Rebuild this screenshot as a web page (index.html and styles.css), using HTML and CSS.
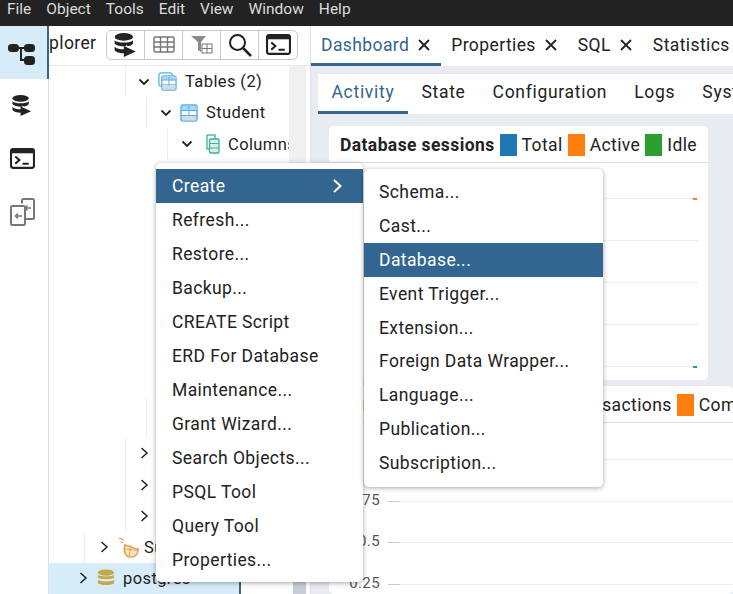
FILE: index.html
```html
<!DOCTYPE html>
<html lang="en">
<head>
    <meta charset="UTF-8">
    <meta name="viewport" content="width=device-width, initial-scale=1.0">
    <title>pgAdmin</title>
    <link rel="stylesheet" href="styles.css">
</head>
<body>
    <svg class="defs" width="0" height="0">
        <symbol id="db-run" viewBox="0 0 24 24">
            <ellipse cx="10" cy="4.5" rx="8.5" ry="3.5" fill="currentColor"/>
            <path d="M1.500 7.500c2 3 15 3 17 0v3c-1 1.500-3 2.300-5 2.500l-1.500-1v1.200c-4 .3-9-.7-10.500-2.700z" fill="currentColor"/>
            <path d="M1.500 13.500c1.500 1.700 5 2.500 8.500 2.500v3.500c-4 0-7.500-1-8.500-3zM10 13v10l11-5z" fill="currentColor"/>
        </symbol>
        <symbol id="terminal" viewBox="0 0 24 20">
            <rect x="1" y="1" width="22" height="18" rx="2" fill="#fff" stroke="#222" stroke-width="2"/>
            <rect x="1" y="1" width="22" height="4" fill="#222"/>
            <path d="M5 8l4 3.500-4 3.500M12 15h6" fill="none" stroke="#222" stroke-width="2"/>
        </symbol>
        <symbol id="table" viewBox="0 0 18 18">
            <rect x="1" y="1" width="16" height="16" rx="2" fill="#fff" stroke="#56aee6" stroke-width="1.500"/>
            <rect x="1.500" y="2" width="15" height="4.500" fill="#a8d6f2"/>
            <path d="M1 6.500h16M1 11.500h16M9 2v15" stroke="#56aee6" stroke-width="1"/>
            <rect x="2" y="12" width="14" height="4.500" fill="#d5dbe4"/>
        </symbol>
        <symbol id="tables" viewBox="0 0 20 20">
            <rect x="1" y="1" width="14" height="14" rx="2" fill="#fff" stroke="#56aee6" stroke-width="1.300"/>
            <rect x="4" y="4" width="15" height="15" rx="2" fill="#fff" stroke="#56aee6" stroke-width="1.300"/>
            <rect x="4.500" y="5" width="14" height="3.500" fill="#a8d6f2"/>
            <path d="M4 8.500h15M4 13.500h15M11.500 5v14" stroke="#56aee6"/>
            <rect x="5" y="14" width="13" height="4.300" fill="#d5dbe4"/>
        </symbol>
        <symbol id="close" viewBox="0 0 14 14">
            <path d="M2 2l10 10M12 2L2 12" fill="none" stroke="#222" stroke-width="1.800"/>
        </symbol>
        <symbol id="chev-down" viewBox="0 0 12 12">
            <path d="M1.500 3.500L6 8l4.500-4.500" fill="none" stroke="#222" stroke-width="1.800"/>
        </symbol>
        <symbol id="chev-right" viewBox="0 0 12 12">
            <path d="M3.500 1L9 6l-5.500 5" fill="none" stroke="#222" stroke-width="1.500"/>
        </symbol>
    </svg>

    <div class="app">
        <div class="menubar">
            <span>File</span>
            <span>Object</span>
            <span>Tools</span>
            <span>Edit</span>
            <span>View</span>
            <span>Window</span>
            <span>Help</span>
        </div>

        <div class="workspace">
            <div class="rail">
                <div class="rail-item active">
                    <svg width="28" height="24" viewBox="0 0 28 24">
                        <rect x="0" y="3" width="11" height="8" rx="3.500" fill="#222"/>
                        <rect x="16" y="3" width="11" height="8" rx="3.500" fill="#222"/>
                        <rect x="16" y="15" width="11" height="9" rx="3.500" fill="#222"/>
                        <path d="M10 7h7M13 7v12h4" fill="none" stroke="#222" stroke-width="2"/>
                    </svg>
                </div>
                <div class="rail-item"><svg width="23" height="23"><use href="#db-run"/></svg></div>
                <div class="rail-item"><svg width="25" height="21"><use href="#terminal"/></svg></div>
                <div class="rail-item">
                    <svg width="26" height="28" viewBox="0 0 26 28">
                        <path d="M12 5.500V2.500A1.500 1.500 0 0 1 13.500 1h9A1.500 1.500 0 0 1 24 2.500v17a1.500 1.500 0 0 1-1.500 1.500H16" fill="none" stroke="#777" stroke-width="2"/>
                        <rect x="1" y="8" width="14" height="19" rx="1.500" fill="#fff" stroke="#777" stroke-width="2"/>
                        <path d="M21 10h-6M17.500 7.500L15 10l2.500 2.500M12 18H5M8 15.500L5.500 18 8 20.500" fill="none" stroke="#777" stroke-width="1.500"/>
                    </svg>
                </div>
            </div>

            <div class="explorer">
                <div class="explorer-head">
                    <span class="explorer-title">plorer</span>
                    <div class="toolbar">
                        <button><svg width="26" height="26"><use href="#db-run"/></svg></button>
                        <button>
                            <svg width="22" height="17" viewBox="0 0 22 17">
                                <rect x="1" y="1" width="20" height="15" rx="1.500" fill="#fff" stroke="#777" stroke-width="1.500"/>
                                <path d="M1 6h20M1 11h20M7.500 1v15M14.500 1v15" stroke="#777" stroke-width="1.500"/>
                            </svg>
                        </button>
                        <button>
                            <svg width="22" height="19" viewBox="0 0 22 19">
                                <path d="M0 1h15l-5 6v10l-3-2V7z" fill="#8a8a8a"/>
                                <rect x="11" y="9" width="10" height="9" fill="#fff" stroke="#777"/>
                                <path d="M11 13.500h10M16 9v9" stroke="#777"/>
                            </svg>
                        </button>
                        <button>
                            <svg width="24" height="24" viewBox="0 0 24 24">
                                <circle cx="9.500" cy="9.500" r="7.500" fill="none" stroke="#222" stroke-width="2"/>
                                <path d="M15 15l8 8" stroke="#222" stroke-width="2.500"/>
                            </svg>
                        </button>
                        <button><svg width="25" height="21"><use href="#terminal"/></svg></button>
                    </div>
                </div>

                <div class="tree-wrap">
                    <div class="tree">
                        <div class="row lvl-3 guide-125">
                            <svg class="chev" width="12" height="12"><use href="#chev-down"/></svg>
                            <svg class="node" width="19" height="19"><use href="#tables"/></svg>
                            <span>Tables (2)</span>
                        </div>
                        <div class="row lvl-4 guide-146">
                            <svg class="chev" width="12" height="12"><use href="#chev-down"/></svg>
                            <svg class="node" width="18" height="18"><use href="#table"/></svg>
                            <span>Student</span>
                        </div>
                        <div class="row lvl-5 guide-167">
                            <svg class="chev" width="12" height="12"><use href="#chev-down"/></svg>
                            <svg class="node" width="14" height="20" viewBox="0 0 14 20">
                                <rect x="1" y="1" width="8" height="14" fill="#fff" stroke="#3cb39a" stroke-width="1.300"/>
                                <rect x="3.500" y="5" width="9.500" height="14" rx="1" fill="#d8efe9" stroke="#3cb39a" stroke-width="1.300"/>
                                <path d="M3.500 9.500h9.500M3.500 14h9.500" stroke="#3cb39a"/>
                            </svg>
                            <span>Columns</span>
                        </div>
                        <div class="tree-gap"></div>
                        <div class="row lvl-3 guide-125"><svg class="chev" width="12" height="12"><use href="#chev-right"/></svg></div>
                        <div class="row lvl-3 guide-125"><svg class="chev" width="12" height="12"><use href="#chev-right"/></svg></div>
                        <div class="row lvl-3 guide-125"><svg class="chev" width="12" height="12"><use href="#chev-right"/></svg></div>
                        <div class="row lvl-1 guide-84">
                            <svg class="chev" width="12" height="12"><use href="#chev-right"/></svg>
                            <svg class="node" width="22" height="22" viewBox="0 0 24 24">
                                <path d="M8 10c3 0 12 5 14 4 .5 5-3 9-8 9-6 0-9-7-6-13z" fill="#fbe3c6" stroke="#e99a45" stroke-width="1.500"/>
                                <path d="M14 10l-2 13M8 14l14 2" stroke="#e99a45"/>
                                <path d="M1 3c2-1 4 0 5 2M3 6.500c1 0 2 .5 2 1.500M7 9l2 2" fill="none" stroke="#e99a45" stroke-width="1.300"/>
                            </svg>
                            <span>Subscriptions</span>
                        </div>
                        <div class="row lvl-0 selected">
                            <svg class="chev" width="12" height="12"><use href="#chev-right"/></svg>
                            <svg class="node" width="18" height="18" viewBox="0 0 20 20">
                                <ellipse cx="10" cy="4" rx="9" ry="3.500" fill="#c3a84a"/>
                                <path d="M1 6.500c2 2.500 16 2.500 18 0v3c-2 2.500-16 2.500-18 0zM1 12c2 2.500 16 2.500 18 0v3.500c-2 3-16 3-18 0z" fill="#c3a84a"/>
                            </svg>
                            <span>postgres</span>
                        </div>
                    </div>
                    <div class="tree-scroll"></div>
                </div>
            </div>

            <div class="main">
                <div class="tabs">
                    <div class="tab active">Dashboard <svg width="14" height="14"><use href="#close"/></svg></div>
                    <div class="tab">Properties <svg width="14" height="14"><use href="#close"/></svg></div>
                    <div class="tab">SQL <svg width="14" height="14"><use href="#close"/></svg></div>
                    <div class="tab">Statistics</div>
                </div>
                <div class="panel">
                    <div class="subtabs">
                        <div class="subtab active">Activity</div>
                        <div class="subtab">State</div>
                        <div class="subtab">Configuration</div>
                        <div class="subtab">Logs</div>
                        <div class="subtab">System</div>
                    </div>
                    <div class="dash">
                        <div class="card sessions">
                            <div class="card-head">
                                <b>Database sessions</b>
                                <i class="swatch blue"></i>Total
                                <i class="swatch orange"></i>Active
                                <i class="swatch green"></i>Idle
                            </div>
                            <div class="grid">
                                <div class="grid-line"><i class="mark orange"></i></div>
                                <div class="grid-line"></div>
                                <div class="grid-line"></div>
                                <div class="grid-line"></div>
                                <div class="grid-line"><i class="mark teal"></i></div>
                            </div>
                        </div>
                        <div class="card transactions">
                            <div class="card-head">
                                <b>Transactions per second</b>
                                <i class="swatch blue"></i>Transactions
                                <i class="swatch orange"></i>Commits
                                <i class="swatch green"></i>Rollbacks
                            </div>
                            <div class="axis">
                                <div class="axis-row"><span></span><div class="axis-line"></div></div>
                                <div class="axis-row"><span>0.75</span><div class="axis-line"></div></div>
                                <div class="axis-row"><span>0.5</span><div class="axis-line"></div></div>
                                <div class="axis-row"><span>0.25</span><div class="axis-line"></div></div>
                            </div>
                        </div>
                    </div>
                </div>
            </div>
        </div>

        <div class="menu context">
            <div class="item hover">Create <svg width="12" height="14" viewBox="0 0 12 14"><path d="M2 1l6.500 6L2 13" fill="none" stroke="#fff" stroke-width="2"/></svg></div>
            <div class="item">Refresh...</div>
            <div class="item">Restore...</div>
            <div class="item">Backup...</div>
            <div class="item">CREATE Script</div>
            <div class="item">ERD For Database</div>
            <div class="item">Maintenance...</div>
            <div class="item">Grant Wizard...</div>
            <div class="item">Search Objects...</div>
            <div class="item">PSQL Tool</div>
            <div class="item">Query Tool</div>
            <div class="item">Properties...</div>
        </div>
        <div class="menu submenu">
            <div class="item">Schema...</div>
            <div class="item">Cast...</div>
            <div class="item hover">Database...</div>
            <div class="item">Event Trigger...</div>
            <div class="item">Extension...</div>
            <div class="item">Foreign Data Wrapper...</div>
            <div class="item">Language...</div>
            <div class="item">Publication...</div>
            <div class="item">Subscription...</div>
        </div>
    </div>
</body>
</html>
```

FILE: styles.css
```css
* {
    box-sizing: border-box;
}
body {
    margin: 0;
    font-family: Roboto, "Liberation Sans", sans-serif;
    font-size: 17.500px;
    letter-spacing: 0.4px;
    color: #222;
    background-color: #fff;
}
.defs {
    position: absolute;
}
.app {
    position: relative;
    display: flex;
    flex-direction: column;
    height: 594px;
    overflow: hidden;
}

/* top menu */
.menubar {
    display: flex;
    gap: 15px;
    height: 26px;
    padding: 0 7px;
    flex-shrink: 0;
    background-color: #222;
    color: #ddd;
    font-size: 15.500px;
    letter-spacing: 0;
    line-height: 18px;
}
.workspace {
    display: flex;
    flex: 1;
    min-height: 0;
}

/* icon rail */
.rail {
    width: 49px;
    flex-shrink: 0;
    border-right: 1px solid #dde0e8;
    color: #222;
}
.rail-item {
    display: flex;
    align-items: center;
    justify-content: center;
    height: 53px;
    padding-right: 3px;
}
.rail-item.active {
    background-color: #d6edf9;
    border-right: 2px solid #326690;
    margin-right: -1px;
}

/* explorer */
.explorer {
    display: flex;
    flex-direction: column;
    width: 262px;
    flex-shrink: 0;
    border-right: 1px solid #dde0e8;
}
.explorer-head {
    display: flex;
    align-items: center;
    height: 40px;
    flex-shrink: 0;
    padding-bottom: 2px;
    border-bottom: 1px solid #e4e7ee;
}
.explorer-title {
    width: 57px;
    padding-bottom: 3px;
}
.toolbar {
    display: flex;
    height: 30px;
    border: 1px solid #c6c9d0;
    border-radius: 5px;
}
.toolbar button {
    display: flex;
    align-items: center;
    justify-content: center;
    width: 38px;
    padding: 0;
    border: 0;
    border-right: 1px solid #c6c9d0;
    background: none;
    color: #222;
}
.toolbar button:last-child {
    border-right: 0;
}
.tree-wrap {
    display: flex;
    flex: 1;
    min-height: 0;
}
.tree {
    display: flex;
    flex-direction: column;
    width: 240px;
    flex-shrink: 0;
    white-space: nowrap;
    overflow: hidden;
}
.tree-scroll {
    width: 17px;
    background:
        linear-gradient(#c6ccd8, #c6ccd8) no-repeat 4px 490px / 13px 100%,
        linear-gradient(#f0f0f0, #f0f0f0) no-repeat 0 0 / 100% 490px;
}
.row {
    display: flex;
    align-items: center;
    gap: 8px;
    height: 31.250px;
    flex-shrink: 0;
    font-size: 16.500px;
}
.chev {
    flex-shrink: 0;
}
.node {
    flex-shrink: 0;
}
.lvl-0 {
    padding-left: 28px;
}
.lvl-1 {
    padding-left: 49px;
}
.lvl-1 .node {
    margin-right: -4px;
}
.lvl-3 {
    padding-left: 89px;
}
.lvl-4 {
    padding-left: 111px;
}
.lvl-5 {
    padding-left: 132px;
}
.lvl-5 .node {
    margin-left: 5px;
}
/* indent guides, x is measured from the left of the tree */
.guide-84 {
    background: linear-gradient(#ececec, #ececec) no-repeat 35px 0 / 1px 100%;
}
.guide-125 {
    background: linear-gradient(#ececec, #ececec) no-repeat 76px 0 / 1px 100%;
}
.guide-146 {
    background: linear-gradient(#ececec, #ececec) no-repeat 97px 0 / 1px 100%;
}
.guide-167 {
    background: linear-gradient(#ececec, #ececec) no-repeat 118px 0 / 1px 100%;
}
.tree-gap {
    flex: 1;
    background: linear-gradient(#ececec, #ececec) no-repeat 97px 100% / 1px 40px;
}
.selected {
    width: 192px;
    background-color: #d6edf9;
    border-right: 2px solid #326690;
}

/* dashboard */
.main {
    display: flex;
    flex-direction: column;
    flex: 1;
    min-width: 0;
}
.tabs {
    display: flex;
    height: 40px;
    flex-shrink: 0;
    white-space: nowrap;
    overflow: hidden;
}
.tab {
    display: flex;
    align-items: center;
    gap: 8px;
    padding: 0 10px;
    height: 40px;
    border-bottom: 3px solid transparent;
}
.tab.active {
    color: #326690;
    border-bottom-color: #326690;
}
.panel {
    display: flex;
    flex-direction: column;
    flex: 1;
    min-height: 0;
    padding: 8px 0 0 7px;
    background-color: #e8ebf1;
}
.subtabs {
    display: flex;
    height: 40px;
    flex-shrink: 0;
    background-color: #fff;
    white-space: nowrap;
    overflow: hidden;
}
.subtab {
    padding: 0 13.500px;
    height: 40px;
    line-height: 37px;
    letter-spacing: 0.7px;
    border-bottom: 3px solid transparent;
}
.subtab.active {
    color: #326690;
    border-bottom-color: #326690;
}
.dash {
    display: flex;
    flex-direction: column;
    gap: 6px;
    flex: 1;
    min-height: 0;
    padding: 12px 0 0 11px;
}
.card {
    flex-shrink: 0;
    background-color: #fff;
    border-radius: 5px;
    overflow: hidden;
}
.sessions {
    height: 254px;
    margin-right: 25px;
}
.transactions {
    flex: 1;
}
.card-head {
    display: flex;
    align-items: center;
    height: 37px;
    padding: 2px 0 0 11px;
    border-bottom: 1px solid #dde0e8;
    white-space: nowrap;
}
.transactions .card-head {
    padding-left: 7px;
}
.card-head b {
    font-weight: 700;
}
.swatch {
    width: 17px;
    height: 22px;
    margin: 0 5px;
    flex-shrink: 0;
}
.blue {
    background-color: #1f77b4;
}
.orange {
    background-color: #ff7f0e;
}
.green {
    background-color: #2ca02c;
}
.teal {
    background-color: #17a2a2;
}
.grid {
    display: flex;
    flex-direction: column;
    padding: 35px 10px 0 60px;
}
.grid-line {
    display: flex;
    justify-content: flex-end;
    height: 42px;
    border-top: 1px solid #eee;
    font-size: 0;
}
.mark {
    width: 4px;
    height: 2px;
    margin: -1px 1px 0 0;
}
.axis {
    display: flex;
    flex-direction: column;
    padding-top: 36px;
}
.axis-row {
    display: flex;
    align-items: flex-start;
    height: 41.500px;
}
.axis-row span {
    width: 51px;
    margin-top: -10px;
    text-align: right;
    font-size: 15px;
    color: #555;
}
.axis-line {
    flex: 1;
    margin-left: 8px;
    height: 1px;
    background: linear-gradient(90deg, #ccc 12px, #eee 12px);
}

/* context menus */
.menu {
    position: absolute;
    padding: 6px 0;
    background-color: #fff;
    border-radius: 5px;
    box-shadow: 0 1px 5px rgba(0, 0, 0, 0.35);
}
.context {
    left: 156px;
    top: 163px;
    width: 207px;
    height: 419px;
}
.submenu {
    left: 364px;
    top: 169px;
    width: 239px;
    height: 318px;
}
.item {
    display: flex;
    align-items: center;
    justify-content: space-between;
    height: 34px;
    padding: 0 19px 0 16px;
    font-size: 17.500px;
}
.submenu .item {
    height: 33.900px;
    padding-left: 15px;
}
.item.hover {
    background-color: #326690;
    color: #fff;
}
```
